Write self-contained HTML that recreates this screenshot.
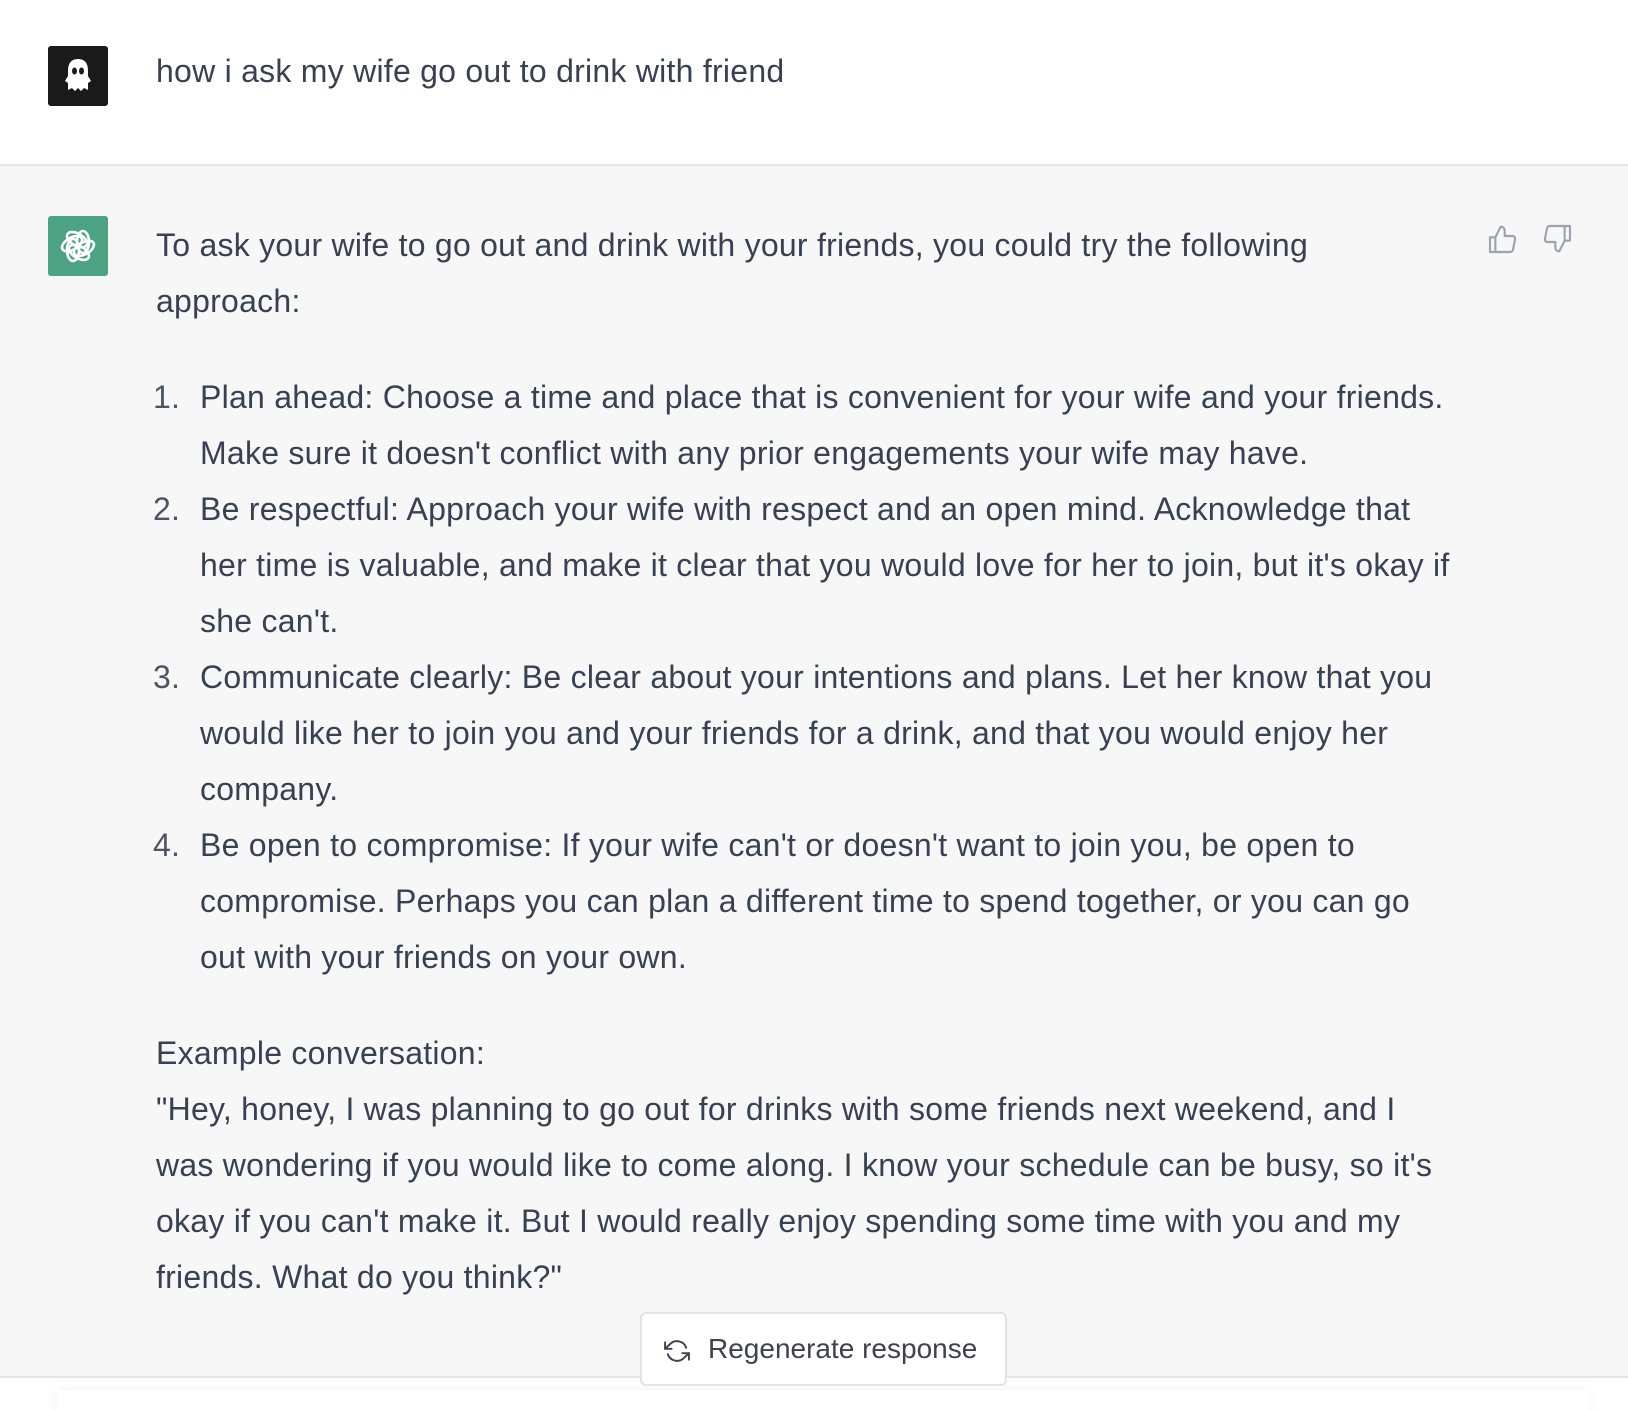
<!DOCTYPE html>
<html><head><meta charset="utf-8"><style>
*{margin:0;padding:0;box-sizing:border-box}
body{width:1628px;height:1402px;overflow:hidden;background:#fff;font-family:"Liberation Sans",Arial,sans-serif;color:#374151;position:relative}
.top{position:absolute;left:0;top:0;width:1628px;height:166px;background:#fff;border-bottom:2px solid #e5e5e6}
.av{position:absolute;width:60px;height:60px;border-radius:3px}
.t{position:absolute;left:156px;font-size:32px;letter-spacing:0.25px;line-height:56px;white-space:nowrap}
.bot{position:absolute;left:0;top:166px;width:1628px;height:1211px;background:#f7f7f8}
.l{height:56px;white-space:nowrap}
.n{position:absolute;left:153px;color:#4b5563}
.btn{position:absolute;left:640px;top:1312px;width:367px;height:74px;background:#fff;border:2px solid #e3e3e6;border-radius:6px;font-size:28px;line-height:70px;padding-left:66px;color:#40414f}
.line{position:absolute;left:0;top:1376px;width:1628px;height:2px;background:#e5e5e6}
.sh{position:absolute;left:57px;top:1390px;width:1531px;height:20px;box-shadow:0 0 14px rgba(0,0,0,0.06)}
</style></head><body>
<div class="top"></div>
<div class="av" style="left:48px;top:46px;background:#1a1a1a">
<svg width="60" height="60" viewBox="0 0 60 60"><path d="M20 44 L20 25 Q20 13 30 13 Q40 13 40 25 L40 44 L36 42 L33 45 L30 42 L27 45 L24 42 Z M17 35 L20 30 L20 37 Z M43 35 L40 30 L40 37 Z" fill="#fff"/><ellipse cx="26.5" cy="25" rx="2.5" ry="3.5" fill="#1a1a1a"/><ellipse cx="33.5" cy="25" rx="2.5" ry="3.5" fill="#1a1a1a"/></svg>
</div>
<div class="t" style="top:43px">how i ask my wife go out to drink with friend</div>
<div class="bot"></div>
<div class="av" style="left:48px;top:216px;background:#4ca383">
<svg width="60" height="60" viewBox="0 0 60 60" fill="none" stroke="#fff" stroke-width="2.6"><g transform="translate(30 30)">
<ellipse rx="6" ry="11" transform="rotate(0) translate(5 -4)"/>
<ellipse rx="6" ry="11" transform="rotate(60) translate(5 -4)"/>
<ellipse rx="6" ry="11" transform="rotate(120) translate(5 -4)"/>
<ellipse rx="6" ry="11" transform="rotate(180) translate(5 -4)"/>
<ellipse rx="6" ry="11" transform="rotate(240) translate(5 -4)"/>
<ellipse rx="6" ry="11" transform="rotate(300) translate(5 -4)"/>
</g></svg>
</div>
<div class="t" style="top:217px">
<div class="l">To ask your wife to go out and drink with your friends, you could try the following</div>
<div class="l">approach:</div>
</div>
<div class="t" style="top:369px;left:200px">
<div class="l">Plan ahead: Choose a time and place that is convenient for your wife and your friends.</div>
<div class="l">Make sure it doesn't conflict with any prior engagements your wife may have.</div>
<div class="l">Be respectful: Approach your wife with respect and an open mind. Acknowledge that</div>
<div class="l">her time is valuable, and make it clear that you would love for her to join, but it's okay if</div>
<div class="l">she can't.</div>
<div class="l">Communicate clearly: Be clear about your intentions and plans. Let her know that you</div>
<div class="l">would like her to join you and your friends for a drink, and that you would enjoy her</div>
<div class="l">company.</div>
<div class="l">Be open to compromise: If your wife can't or doesn't want to join you, be open to</div>
<div class="l">compromise. Perhaps you can plan a different time to spend together, or you can go</div>
<div class="l">out with your friends on your own.</div>
</div>
<div class="t n" style="top:369px;left:153px">1.</div>
<div class="t n" style="top:481px;left:153px">2.</div>
<div class="t n" style="top:649px;left:153px">3.</div>
<div class="t n" style="top:817px;left:153px">4.</div>
<div class="t" style="top:1025px">
<div class="l">Example conversation:</div>
<div class="l">"Hey, honey, I was planning to go out for drinks with some friends next weekend, and I</div>
<div class="l">was wondering if you would like to come along. I know your schedule can be busy, so it's</div>
<div class="l">okay if you can't make it. But I would really enjoy spending some time with you and my</div>
<div class="l">friends. What do you think?"</div>
</div>
<svg style="position:absolute;left:1486px;top:224px" width="32" height="32" viewBox="0 0 24 24" fill="none" stroke="#9ca3af" stroke-width="1.6" stroke-linejoin="round"><path d="M7 10v11H3V10z"/><path d="M7 10l4-8c2 0 3 1.3 3 3v4h6c1 0 2 1 1.8 2.2l-1.5 8C20 20.3 19 21 18 21H7"/></svg>
<svg style="position:absolute;left:1542px;top:222px" width="32" height="32" viewBox="0 0 24 24" fill="none" stroke="#9ca3af" stroke-width="1.6" stroke-linejoin="round"><path d="M17 14V3h4v11z"/><path d="M17 14l-4 8c-2 0-3-1.3-3-3v-4H4c-1 0-2-1-1.8-2.2l1.5-8C4 3.7 5 3 6 3h11"/></svg>
<div class="line"></div>
<div class="sh"></div>
<div class="btn">Regenerate response
<svg style="position:absolute;left:22px;top:24px" width="26" height="26" viewBox="0 0 24 24" fill="none" stroke="#40414f" stroke-width="1.8" stroke-linecap="round" stroke-linejoin="round"><path d="M1 4v6h6"/><path d="M23 20v-6h-6"/><path d="M20.5 9A9 9 0 0 0 5.6 5.6L1 10m22 4l-4.6 4.4A9 9 0 0 1 3.5 15"/></svg>
</div>
</body></html>
